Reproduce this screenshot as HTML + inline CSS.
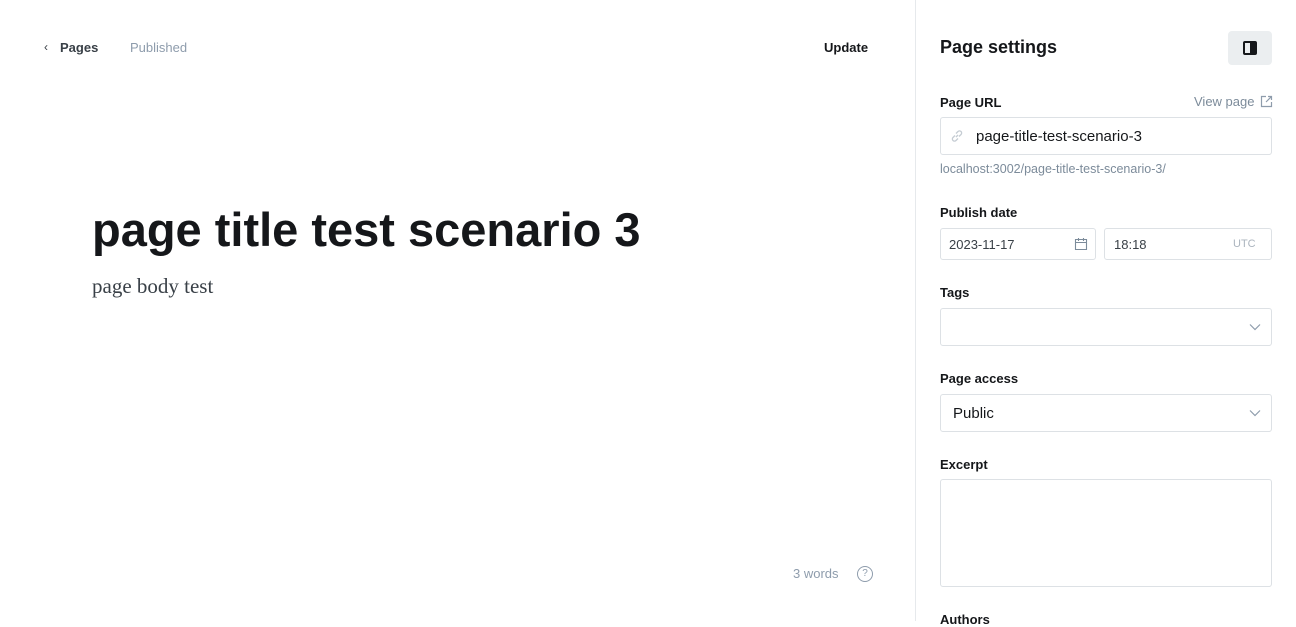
<!DOCTYPE html>
<html><head><style>
*{box-sizing:border-box;margin:0;padding:0}
body{width:1296px;height:621px;overflow:hidden;background:#fff;font-family:"Liberation Sans","DejaVu Sans",sans-serif;color:#15171a;position:relative}
.a{position:absolute;white-space:nowrap}
.side{position:absolute;left:915px;top:0;width:381px;height:621px;border-left:1px solid #e6e9ec;background:#fff}
.lbl{position:absolute;left:24px;font-size:13px;font-weight:bold;color:#15171a}
.in{position:absolute;left:24px;width:332px;border:1px solid #dde1e5;border-radius:3px;background:#fff}
</style></head><body>
<div class="a" style="left:44px;top:40px;font-size:12px;color:#394047">&#8249;</div>
<div class="a" style="left:60px;top:40px;font-size:13px;font-weight:bold;color:#394047">Pages</div>
<div class="a" style="left:130px;top:40px;font-size:13px;color:#8e9cac">Published</div>
<div class="a" style="left:824px;top:40px;font-size:13px;font-weight:bold;color:#15171a">Update</div>
<div class="a" style="left:92px;top:202px;font-size:47px;font-weight:bold;letter-spacing:0;color:#15171a">page title test scenario 3</div>
<div class="a" style="left:92px;top:274px;font-size:21px;font-family:'Liberation Serif',serif;color:#394047">page body test</div>
<div class="a" style="left:793px;top:566px;font-size:13px;color:#8e9cac">3 words</div>
<div class="a" style="left:857px;top:566px;width:16px;height:16px;border:1.3px solid #8e9cac;border-radius:50%;font-size:10px;color:#8e9cac;text-align:center;line-height:14px">?</div>
<div class="side">
<div class="a" style="left:24px;top:37px;font-size:18px;font-weight:bold">Page settings</div>
<div class="a" style="left:312px;top:31px;width:44px;height:34px;background:#ebeef0;border-radius:4px"><div style="position:absolute;left:15px;top:10px;width:14px;height:14px;border:2px solid #15171a;border-radius:2px"><div style="position:absolute;right:0;top:0;width:5px;height:10px;background:#15171a"></div></div></div>
<div class="lbl" style="top:95px">Page URL</div>
<div class="a" style="left:278px;top:94px;font-size:13px;color:#7c8b9a">View page</div>
<svg class="a" style="left:344px;top:95px" width="13" height="13" viewBox="0 0 13 13" fill="none" stroke="#8e9cac" stroke-width="1.2"><path d="M6 1.5H1.5v10h10V7M8 1.5h3.5V5M11.5 1.5L6 7"/></svg>
<div class="in" style="top:117px;height:38px"><svg class="a" style="left:9px;top:11px" width="14" height="14" viewBox="0 0 14 14" fill="none" stroke="#c5ccd3" stroke-width="1.3"><path d="M6 8l2-2M5 6.5L3 8.5a2 2 0 003 3l2-2M9 7.5l2-2a2 2 0 00-3-3l-2 2"/></svg><span class="a" style="left:35px;top:10px;font-size:15px;color:#15171a">page-title-test-scenario-3</span></div>
<div class="a" style="left:24px;top:162px;font-size:12.5px;color:#7c8b9a">localhost:3002/page-title-test-scenario-3/</div>
<div class="lbl" style="top:205px">Publish date</div>
<div class="in" style="top:228px;width:156px;height:32px"><span class="a" style="left:8px;top:8px;font-size:13px;color:#394047">2023-11-17</span><svg class="a" style="left:133px;top:8px" width="14" height="14" viewBox="0 0 14 14" fill="none" stroke="#7c8b9a" stroke-width="1.1"><path d="M1.5 2.5h11v10h-11zM1.5 5.5h11M4.5 1v3M9.5 1v3"/></svg></div>
<div class="in" style="left:188px;top:228px;width:168px;height:32px"><span class="a" style="left:9px;top:8px;font-size:13px;color:#394047">18:18</span><span class="a" style="left:128px;top:9px;font-size:11px;color:#abb4be">UTC</span></div>
<div class="lbl" style="top:285px">Tags</div>
<div class="in" style="top:308px;height:38px"><svg class="a" style="left:308px;top:14px" width="12" height="8" viewBox="0 0 12 8" fill="none" stroke="#8e9cac" stroke-width="1.2"><path d="M1 1.5l5 5 5-5"/></svg></div>
<div class="lbl" style="top:371px">Page access</div>
<div class="in" style="top:394px;height:38px"><span class="a" style="left:12px;top:10px;font-size:15px;color:#15171a">Public</span><svg class="a" style="left:308px;top:14px" width="12" height="8" viewBox="0 0 12 8" fill="none" stroke="#8e9cac" stroke-width="1.2"><path d="M1 1.5l5 5 5-5"/></svg></div>
<div class="lbl" style="top:457px">Excerpt</div>
<div class="in" style="top:479px;height:108px"></div>
<div class="lbl" style="top:612px">Authors</div>
</div>
</body></html>
